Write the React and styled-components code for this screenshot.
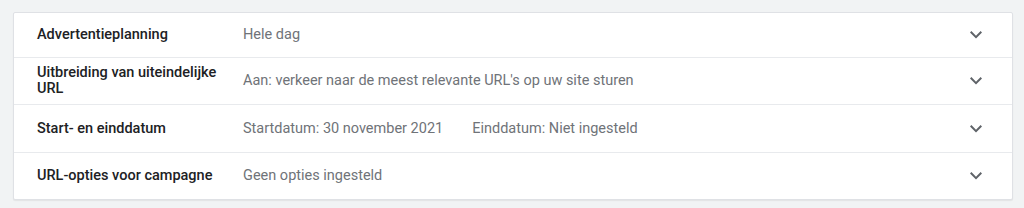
import React from "react";
import styled, { createGlobalStyle } from "styled-components";

const Global = createGlobalStyle`
  body {
    margin: 0;
    background: #f1f3f4;
    font-family: Roboto, "Liberation Sans", Arial, sans-serif;
  }
`;

const Page = styled.div`
  padding: 12px 11px 8px 13px;
`;

const Card = styled.div`
  background: #fff;
  border: 1px solid #dfe1e5;
  border-radius: 2px;
  box-shadow: 0 1px 1px rgba(60, 64, 67, 0.08);
`;

const Row = styled.div`
  display: grid;
  grid-template-columns: 206px 1fr 40px;
  align-items: center;
  min-height: ${(p) => p.$h || 46}px;
  padding-left: 23px;
  padding-right: 16px;
  & + & {
    border-top: 1px solid #e8eaed;
  }
`;

const Label = styled.div`
  color: #202124;
  font-size: 14.5px;
  font-weight: 500;
  line-height: 16px;
  padding-right: 8px;
`;

const Value = styled.div`
  color: #6f7378;
  font-size: 14.5px;
  line-height: 16px;
  display: flex;
  gap: 29px;
`;

const Chevron = styled.div`
  display: flex;
  justify-content: center;
  color: #5f6368;
`;

function ChevronDown() {
  return (
    <svg width="12" height="8" viewBox="0 0 12 8">
      <path d="M1.4 0.6 L6 5.2 L10.6 0.6 L12 2 L6 8 L0 2 Z" fill="currentColor" transform="translate(0,-0.5)" />
    </svg>
  );
}

const rows = [
  { label: "Advertentieplanning", values: ["Hele dag"], h: 44 },
  {
    label: "Uitbreiding van uiteindelijke URL",
    values: ["Aan: verkeer naar de meest relevante URL's op uw site sturen"],
    h: 46,
  },
  {
    label: "Start- en einddatum",
    values: ["Startdatum: 30 november 2021", "Einddatum: Niet ingesteld"],
    h: 47,
  },
  { label: "URL-opties voor campagne", values: ["Geen opties ingesteld"], h: 46 },
];

export default function App() {
  return (
    <>
      <Global />
      <Page>
        <Card>
          {rows.map((r) => (
            <Row key={r.label} $h={r.h}>
              <Label>{r.label}</Label>
              <Value>
                {r.values.map((v) => (
                  <span key={v}>{v}</span>
                ))}
              </Value>
              <Chevron>
                <ChevronDown />
              </Chevron>
            </Row>
          ))}
        </Card>
      </Page>
    </>
  );
}
